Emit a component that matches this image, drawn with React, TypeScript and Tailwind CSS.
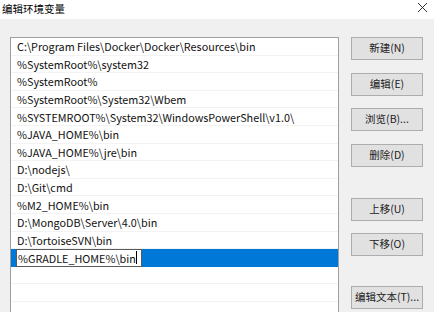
const rows = [
  'C:\\Program Files\\Docker\\Docker\\Resources\\bin',
  '%SystemRoot%\\system32',
  '%SystemRoot%',
  '%SystemRoot%\\System32\\Wbem',
  '%SYSTEMROOT%\\System32\\WindowsPowerShell\\v1.0\\',
  '%JAVA_HOME%\\bin',
  '%JAVA_HOME%\\jre\\bin',
  'D:\\nodejs\\',
  'D:\\Git\\cmd',
  '%M2_HOME%\\bin',
  'D:\\MongoDB\\Server\\4.0\\bin',
  'D:\\TortoiseSVN\\bin',
];

const font = "font-['Noto_Sans_CJK_SC','Noto_Sans',sans-serif]";

function Btn({ label, className = '' }: { label: string; className?: string }) {
  return (
    <button
      className={`w-[72px] h-[23px] shrink-0 border border-[#adadad] bg-[#e1e1e1] text-[10.5px] text-[#222] leading-none whitespace-nowrap ${className}`}
    >
      {label}
    </button>
  );
}

export default function App() {
  return (
    <div className={`w-[434px] h-[312px] overflow-hidden bg-[#f0f0f0] flex flex-col ${font}`}>
      <div className="h-[19px] shrink-0 bg-white flex items-center justify-between pl-[2px] pr-[6px]">
        <span className="text-[10.5px] text-black leading-none">编辑环境变量</span>
        <svg width="11" height="11" viewBox="0 0 11 11" className="mb-[4px]">
          <path d="M1 1 L10 10 M10 1 L1 10" stroke="#333" strokeWidth="1" />
        </svg>
      </div>

      <div className="flex flex-1 min-h-0 pt-[18px] pl-[10px]">
        <div className="w-[329px] shrink-0 border-l border-t border-r border-[#a0a0a0] bg-white overflow-hidden">
          {rows.map((r) => (
            <div
              key={r}
              className="h-[17.6px] flex items-center pl-[6px] border-b border-[#f3f3f3] text-[10.8px] text-[#111] whitespace-nowrap"
            >
              {r}
            </div>
          ))}
          <div className="h-[17.6px] flex items-center bg-[#0078d7] pl-[5px]">
            <div className="h-full w-[126px] bg-white border border-[#5a5a5a] flex items-center pl-[1px] text-[10.8px] text-[#111] whitespace-nowrap">
              %GRADLE_HOME%\bin<span className="w-px h-[13px] bg-black" />
            </div>
          </div>
          {[0, 1, 2].map((i) => (
            <div key={i} className="h-[17.6px] border-b border-[#f3f3f3]" />
          ))}
        </div>

        <div className="flex flex-col ml-[12px]">
          <Btn label="新建(N)" />
          <Btn label="编辑(E)" className="mt-[13px]" />
          <Btn label="浏览(B)..." className="mt-[12px]" />
          <Btn label="删除(D)" className="mt-[13px]" />
          <Btn label="上移(U)" className="mt-[31px]" />
          <Btn label="下移(O)" className="mt-[12px]" />
          <Btn label="编辑文本(T)..." className="mt-[30px]" />
        </div>
      </div>
    </div>
  );
}
